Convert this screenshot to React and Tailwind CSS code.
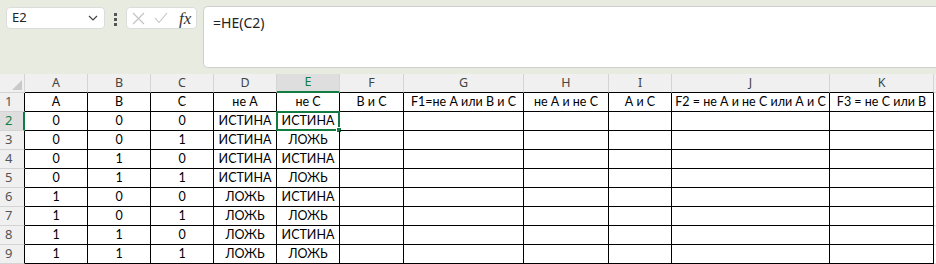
import React from 'react';

const cols = ['A', 'B', 'C', 'D', 'E', 'F', 'G', 'H', 'I', 'J', 'K'];

const headerRow = ['A', 'B', 'C', 'не А', 'не С', 'В и С', 'F1=не А или В и С', 'не А и не С', 'А и С', 'F2 = не А и не С или А и С', 'F3 = не С или В'];

const data = [
    ['0', '0', '0', 'ИСТИНА', 'ИСТИНА'],
    ['0', '0', '1', 'ИСТИНА', 'ЛОЖЬ'],
    ['0', '1', '0', 'ИСТИНА', 'ИСТИНА'],
    ['0', '1', '1', 'ИСТИНА', 'ЛОЖЬ'],
    ['1', '0', '0', 'ЛОЖЬ', 'ИСТИНА'],
    ['1', '0', '1', 'ЛОЖЬ', 'ЛОЖЬ'],
    ['1', '1', '0', 'ЛОЖЬ', 'ИСТИНА'],
    ['1', '1', '1', 'ЛОЖЬ', 'ЛОЖЬ'],
];

function Toolbar() {
    return (
        <div className="h-[74px] flex items-start bg-[#e8ebe0]">
            <div className="mt-[7px] ml-[6px] w-[99px] h-[22px] bg-white rounded-[4px] border border-[#dcdcdc] flex items-center justify-between pl-[5px] pr-[6px]">
                <span className="text-[13px] text-[#222] font-['Noto_Sans',sans-serif]">E2</span>
                <svg width="10" height="6" viewBox="0 0 10 6">
                    <path d="M1 1 L5 5 L9 1" fill="none" stroke="#444" strokeWidth="1.2" />
                </svg>
            </div>
            <div className="mt-[13px] w-[21px] flex flex-col items-center gap-[2px]">
                <div className="w-[3px] h-[3px] bg-[#555]" />
                <div className="w-[3px] h-[3px] bg-[#555]" />
                <div className="w-[3px] h-[3px] bg-[#555]" />
            </div>
            <div className="mt-[7px] w-[71px] h-[22px] bg-white rounded-[4px] border border-[#dcdcdc] flex items-center pl-[5px] gap-[9px]">
                <svg width="13" height="13" viewBox="0 0 13 13">
                    <path d="M1 1 L12 12 M12 1 L1 12" fill="none" stroke="#c2c2c2" strokeWidth="1.1" />
                </svg>
                <svg width="14" height="12" viewBox="0 0 14 12">
                    <path d="M1 6 L5 10.5 L13 1" fill="none" stroke="#c2c2c2" strokeWidth="1.1" />
                </svg>
                <span className="text-[17px] italic leading-none text-[#333] font-['Liberation_Serif',serif] ml-[2px]">fx</span>
            </div>
            <div className="mt-[6px] ml-[6px] flex-1 h-[62px] bg-white rounded-l-[5px] border border-r-0 border-[#cfcfcf] pl-[9px] pt-[3px]">
                <span className="text-[14px] text-[#222] font-['Noto_Sans',sans-serif]">=НЕ(C2)</span>
            </div>
        </div>
    );
}

function Grid() {
    return (
        <div className="grid grid-cols-[25px_63px_63px_63px_63px_63px_64px_120px_85px_63px_158px_104px_1fr] bg-white">
            <div className="h-[19px] bg-[#f0f0f0] border-r border-b border-[#d4d4d4] relative">
                <svg className="absolute right-[2px] bottom-[2px]" width="10" height="10" viewBox="0 0 10 10">
                    <polygon points="10,0 10,10 0,10" fill="#c9c9c9" />
                </svg>
            </div>
            {cols.map((c) => (
                <div
                    key={c}
                    className={
                        c === 'E'
                            ? 'h-[19px] bg-[#dedede] border-r border-[#d4d4d4] border-b-2 border-b-[#107c41] text-[#107c41] flex items-center justify-center text-[12.5px] font-["Noto_Sans",sans-serif]'
                            : 'h-[19px] bg-[#f0f0f0] border-r border-[#d4d4d4] border-b border-b-black text-[#444] flex items-center justify-center text-[12.5px] font-["Noto_Sans",sans-serif]'
                    }
                >
                    {c}
                </div>
            ))}
            <div className="h-[19px] bg-[#f0f0f0] border-b border-[#d4d4d4]" />

            {[headerRow, ...data].map((row, r) => (
                <React.Fragment key={r}>
                    <div
                        className={
                            r === 1
                                ? 'h-[19px] bg-[#dedede] border-b border-b-[#d4d4d4] border-r-2 border-r-[#107c41] text-[#107c41] flex items-center pl-[5px] text-[13px] font-["Noto_Sans",sans-serif]'
                                : 'h-[19px] bg-[#f0f0f0] border-b border-b-[#d4d4d4] border-r border-r-black text-[#555] flex items-center pl-[5px] text-[13px] font-["Noto_Sans",sans-serif]'
                        }
                    >
                        {r + 1}
                    </div>
                    {cols.map((c, i) => (
                        <div
                            key={c}
                            className="h-[19px] border-r border-b border-black flex items-center justify-center text-[12.5px] text-black font-['Lato',sans-serif] whitespace-nowrap overflow-visible relative"
                        >
                            {row[i] || ''}
                            {r === 1 && c === 'E' && (
                                <div className="absolute -left-px -top-px -right-px -bottom-px border-2 border-[#107c41]">
                                    <div className="absolute -right-[4px] -bottom-[4px] w-[6px] h-[6px] bg-[#107c41] border border-white" />
                                </div>
                            )}
                        </div>
                    ))}
                    <div className="h-[19px] border-b border-[#e2e2e2]" />
                </React.Fragment>
            ))}
        </div>
    );
}

export default function App() {
    return (
        <div className="w-[936px] h-[264px] overflow-hidden bg-white">
            <Toolbar />
            <Grid />
        </div>
    );
}
